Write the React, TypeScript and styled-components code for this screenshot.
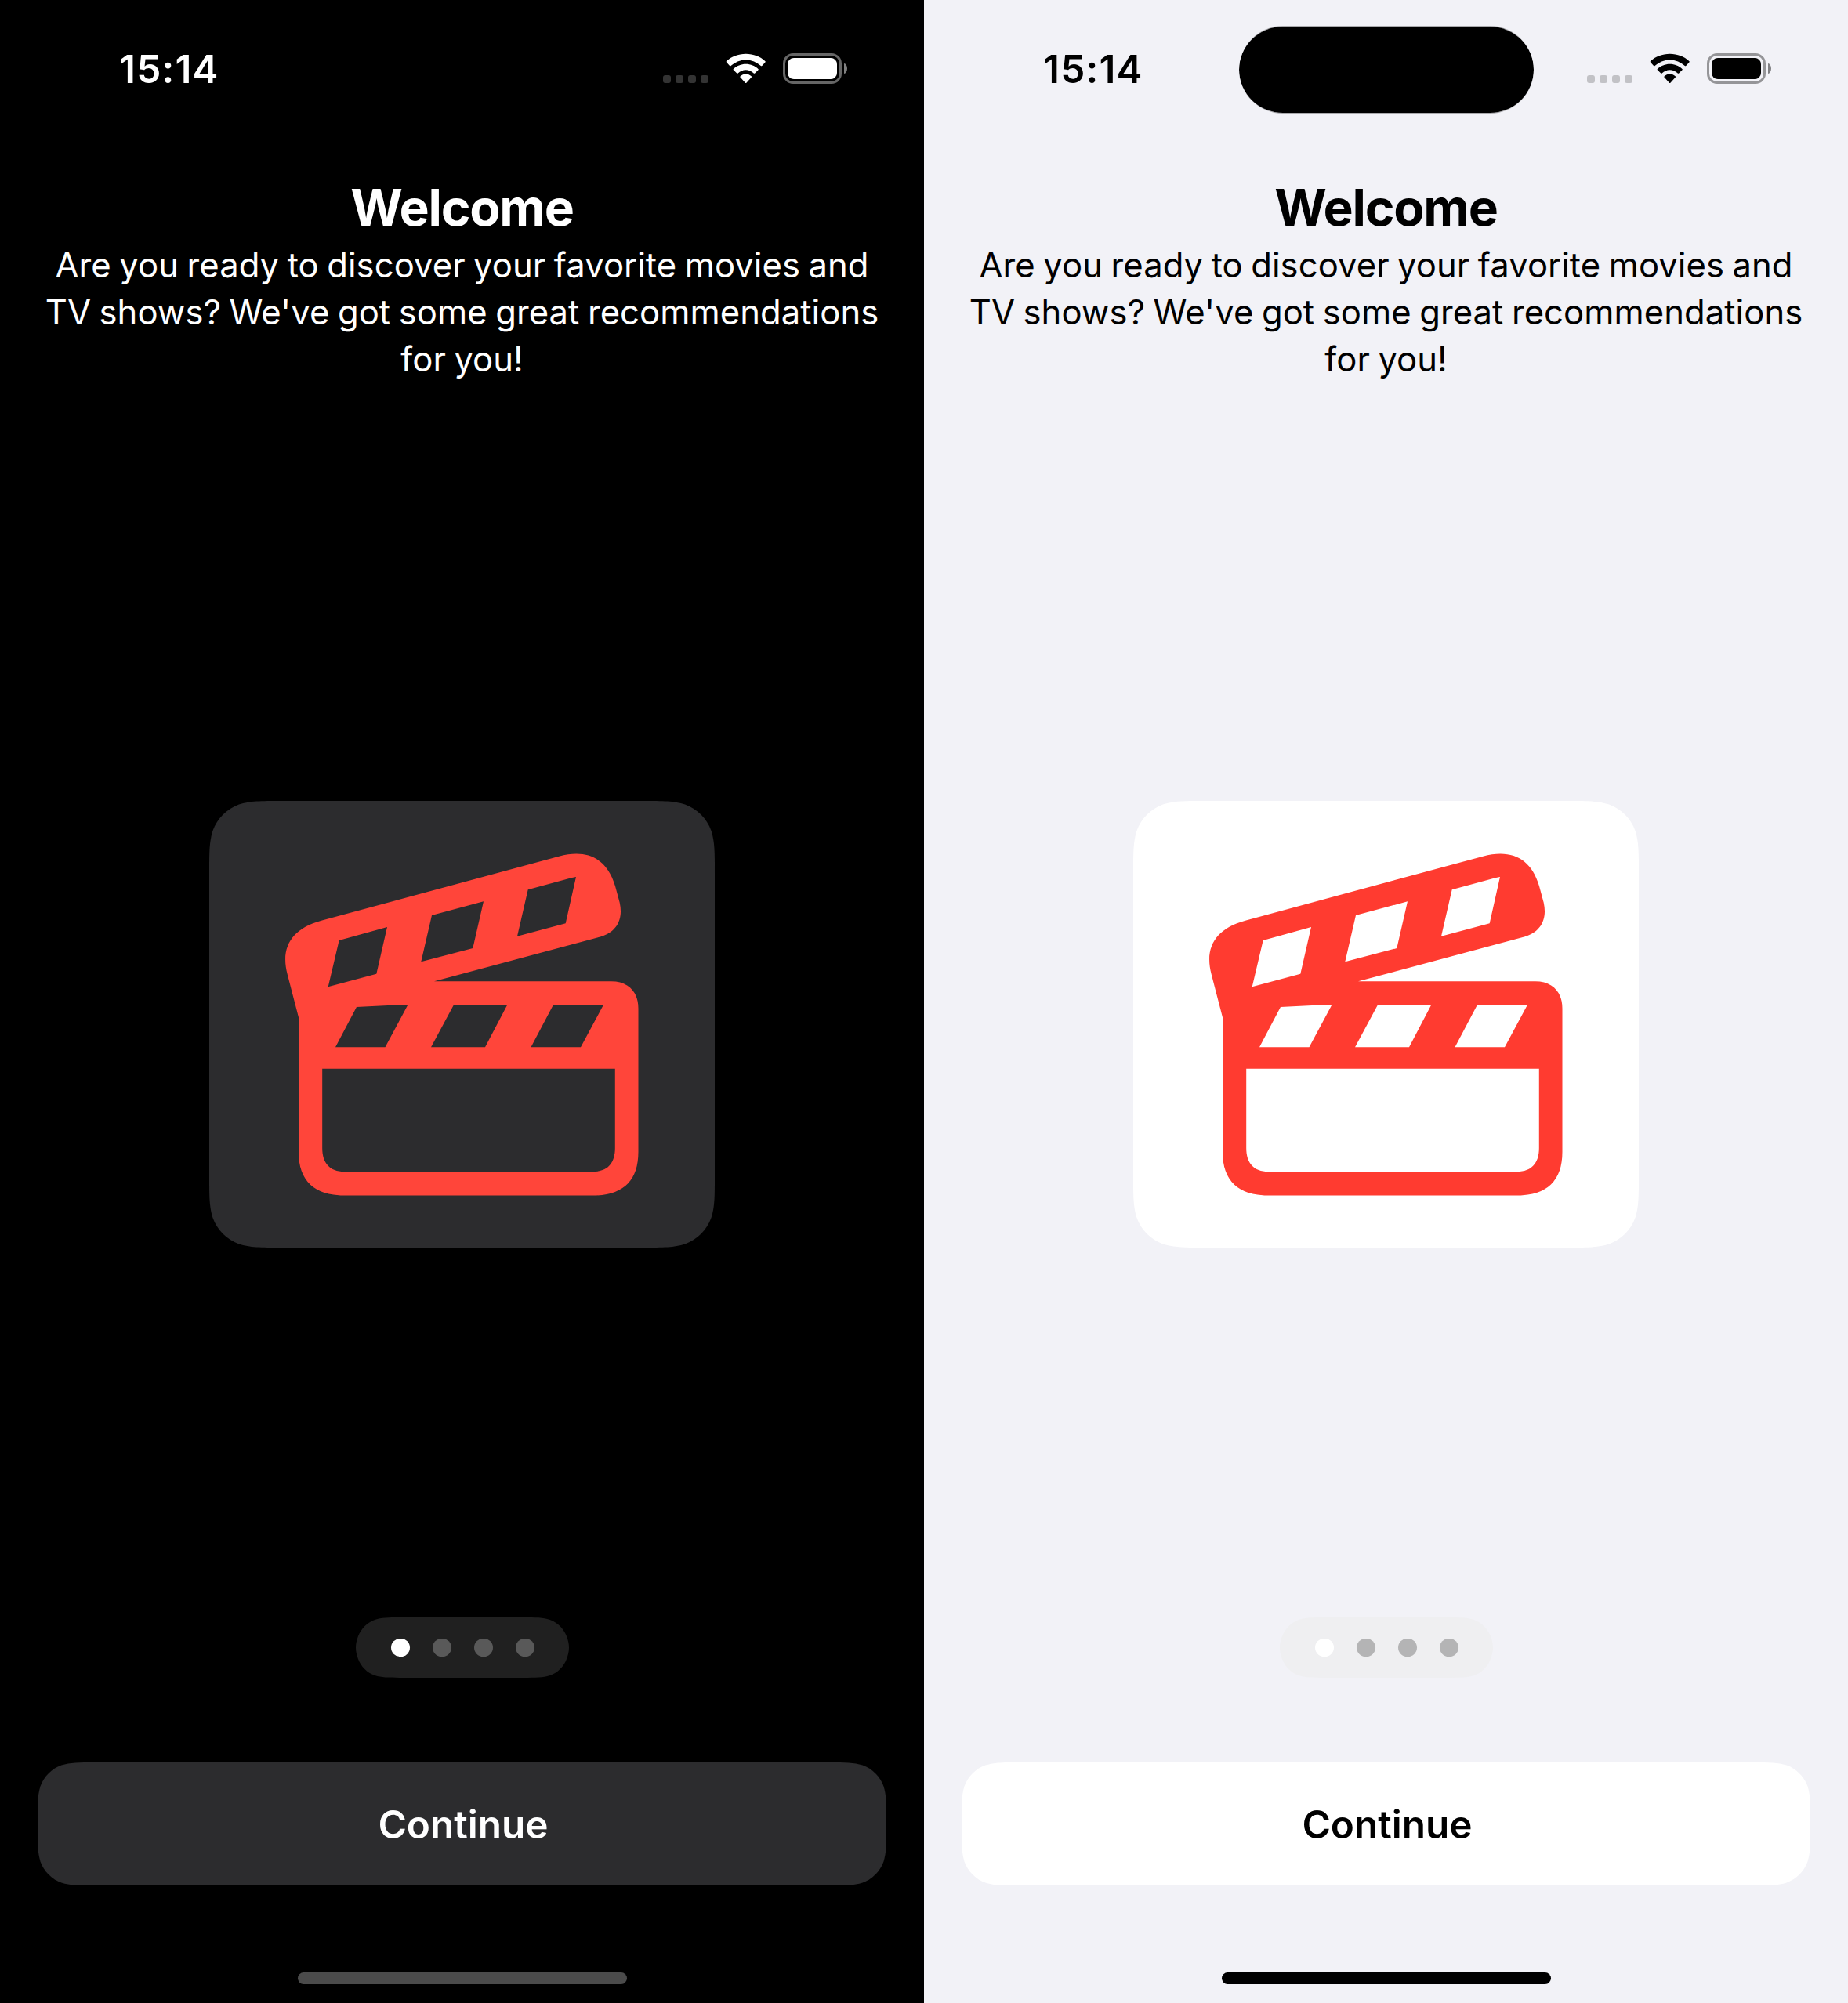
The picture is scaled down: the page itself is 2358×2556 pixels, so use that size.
import React from "react";
import styled, { createGlobalStyle, ThemeProvider } from "styled-components";

const darkTheme = {
  background: "#000000",
  label: "#ffffff",
  surface: "#2c2c2e",
  accent: "#ff453a",
  cell: "#333333",
  batteryRim: "#666666",
  batteryCap: "#808080",
  pill: "#202020",
  dot: "#595959",
  activeDot: "#ffffff",
  indicator: "#4b4b4b",
};

const lightTheme: typeof darkTheme = {
  background: "#f2f2f7",
  label: "#000000",
  surface: "#ffffff",
  accent: "#ff3b30",
  cell: "#c2c2c6",
  batteryRim: "#959598",
  batteryCap: "#808083",
  pill: "#efeff1",
  dot: "#b4b4b5",
  activeDot: "#ffffff",
  indicator: "#000000",
};

/* Rounded rectangle with curvature-continuous corners. */
const continuousRect = (w: number, h: number, r: number) => {
  const a = 1.528665 * r;
  const b = 1.088493 * r;
  const c = 0.868407 * r;
  const d = 0.631494 * r;
  const e = 0.372824 * r;
  const f = 0.16906 * r;
  const g = 0.074911 * r;
  return [
    `M${a} 0 L${w - a} 0`,
    `C${w - b} 0 ${w - c} 0 ${w - d} ${g}`,
    `C${w - e} ${f} ${w - f} ${e} ${w - g} ${d}`,
    `C${w} ${c} ${w} ${b} ${w} ${a}`,
    `L${w} ${h - a}`,
    `C${w} ${h - b} ${w} ${h - c} ${w - g} ${h - d}`,
    `C${w - f} ${h - e} ${w - e} ${h - f} ${w - d} ${h - g}`,
    `C${w - c} ${h} ${w - b} ${h} ${w - a} ${h}`,
    `L${a} ${h}`,
    `C${b} ${h} ${c} ${h} ${d} ${h - g}`,
    `C${e} ${h - f} ${f} ${h - e} ${g} ${h - d}`,
    `C0 ${h - c} 0 ${h - b} 0 ${h - a}`,
    `L0 ${a}`,
    `C0 ${b} 0 ${c} ${g} ${d}`,
    `C${f} ${e} ${e} ${f} ${d} ${g}`,
    `C${c} 0 ${b} 0 ${a} 0Z`,
  ].join(" ");
};

/* Capsule whose ends ease into the straight edges. */
const continuousCapsule = (w: number, h: number) => {
  const r = h / 2;
  const a = 1.528665 * r;
  const b = 1.088493 * r;
  const c = 0.868407 * r;
  const d = 0.631494 * r;
  const e = 0.372824 * r;
  const f = 0.16906 * r;
  const g = 0.074911 * r;
  const i = 0.03 * r;
  const j = 0.75 * r;
  const k = 0.87 * r;
  return [
    `M${a} 0 L${w - a} 0`,
    `C${w - b} 0 ${w - c} 0 ${w - d} ${g}`,
    `C${w - e} ${f} ${w - f} ${e} ${w - g} ${d}`,
    `C${w - i} ${j} ${w} ${k} ${w} ${r}`,
    `C${w} ${h - k} ${w - i} ${h - j} ${w - g} ${h - d}`,
    `C${w - f} ${h - e} ${w - e} ${h - f} ${w - d} ${h - g}`,
    `C${w - c} ${h} ${w - b} ${h} ${w - a} ${h}`,
    `L${a} ${h}`,
    `C${b} ${h} ${c} ${h} ${d} ${h - g}`,
    `C${e} ${h - f} ${f} ${h - e} ${g} ${h - d}`,
    `C${i} ${h - j} 0 ${h - k} 0 ${r}`,
    `C0 ${k} ${i} ${j} ${g} ${d}`,
    `C${f} ${e} ${e} ${f} ${d} ${g}`,
    `C${c} 0 ${b} 0 ${a} 0Z`,
  ].join(" ");
};

const GlobalStyle = createGlobalStyle`
  *, *::before, *::after { box-sizing: border-box; }
  body {
    margin: 0;
    font-family: Inter, "Liberation Sans", sans-serif;
  }
`;

const Gallery = styled.main`
  display: flex;
  width: 2358px;
  height: 2556px;
`;

const Screen = styled.section`
  position: relative;
  display: flex;
  flex-direction: column;
  width: 1179px;
  height: 2556px;
  overflow: hidden;
  background: ${({ theme }) => theme.background};
  color: ${({ theme }) => theme.label};
`;

const StatusBar = styled.header`
  display: flex;
  flex: none;
  justify-content: space-between;
  height: 177px;
  padding: 58px 98px 0 152px;
`;

const Time = styled.time`
  font-size: 49.5px;
  font-weight: 600;
  line-height: 60px;
  letter-spacing: 1.2px;
  white-space: nowrap;
`;

const StatusIcons = styled.div`
  display: flex;
  align-items: flex-start;
  padding-top: 10px;
`;

const Cells = styled.div`
  display: flex;
  gap: 6px;
  margin: 28px 22px 0 0;
`;

const Cell = styled.span`
  width: 10px;
  height: 10px;
  border-radius: 3px;
  background: ${({ theme }) => theme.cell};
`;

const WifiGlyph = styled.svg`
  display: block;
  width: 51px;
  height: 39px;
  margin-right: 22px;
  fill: ${({ theme }) => theme.label};
`;

const Battery = styled.div`
  display: flex;
  align-items: center;
  gap: 3px;
`;

const BatteryBody = styled.div`
  width: 75px;
  height: 39px;
  padding: 3px;
  border: 3px solid ${({ theme }) => theme.batteryRim};
  border-radius: 13px;
`;

const BatteryCharge = styled.div`
  height: 27px;
  border-radius: 8px;
  background: ${({ theme }) => theme.label};
`;

const BatteryCap = styled.div`
  width: 4px;
  height: 13px;
  border-radius: 0 4px 4px 0 / 0 6.5px 6.5px 0;
  background: ${({ theme }) => theme.batteryCap};
`;

const Island = styled.div`
  position: absolute;
  top: 33px;
  left: 402px;
  width: 376px;
  height: 112px;
  border: solid rgba(0, 0, 0, 0.3);
  border-width: 1px 0;
  border-radius: 56px;
  background: #000000;
  background-clip: padding-box;
`;

const Intro = styled.div`
  flex: none;
  height: 327px;
  padding-top: 46px;
  text-align: center;
`;

const Title = styled.h1`
  margin: 0;
  font-size: 64.2px;
  font-weight: 700;
  line-height: 84px;
  letter-spacing: -1.2px;
`;

const Message = styled.p`
  margin: 2px 0 0;
  font-size: 43.6px;
  font-weight: 400;
  line-height: 60px;
  letter-spacing: 0.05px;
  word-spacing: -1.8px;
  white-space: pre-line;
`;

const Stage = styled.div`
  display: flex;
  flex: none;
  justify-content: center;
  height: 1560px;
  padding-top: 518px;
`;

const Card = styled.div`
  width: 645px;
  height: 570px;
  clip-path: path("${continuousRect(645, 570, 60)}");
  background: ${({ theme }) => theme.surface};
`;

const ClapperGlyph = styled.svg`
  display: block;
  width: 645px;
  height: 570px;
  fill: ${({ theme }) => theme.accent};
`;

const PageControl = styled.nav`
  display: flex;
  flex: none;
  align-self: center;
  align-items: center;
  justify-content: center;
  gap: 29.6px;
  width: 272px;
  height: 77px;
  margin-left: 1px;
  padding-left: 1px;
  clip-path: path("${continuousCapsule(272, 77)}");
  background: ${({ theme }) => theme.pill};
`;

const PageDot = styled.span<{ $active: boolean }>`
  width: 23.5px;
  height: 23.5px;
  border-radius: 50%;
  background: ${({ theme, $active }) => ($active ? theme.activeDot : theme.dot)};
`;

const ContinueButton = styled.button`
  flex: none;
  align-self: center;
  width: 1083px;
  height: 157px;
  margin-top: 108px;
  padding: 0 0 0 3px;
  border: 0;
  clip-path: path("${continuousRect(1083, 157, 48)}");
  background: ${({ theme }) => theme.surface};
  color: inherit;
  font-family: inherit;
  font-size: 49.5px;
  font-weight: 600;
  line-height: 60px;
`;

const HomeIndicator = styled.div`
  flex: none;
  align-self: center;
  width: 420px;
  height: 15px;
  margin-top: 111px;
  margin-left: 1px;
  border-radius: 7.5px;
  background: ${({ theme }) => theme.indicator};
`;

const Wifi = () => (
  <WifiGlyph viewBox="926 68 51 39">
    <path d="M951.7 68.8 C961.4 68.8 970.1 72.4 976.3 77.9 C976.8 78.3 976.8 78.9 976.4 79.4 L972.3 83.9 C971.9 84.4 971.3 84.4 970.8 84 C965.6 79.4 959 76.4 951.7 76.4 C944.4 76.4 937.8 79.4 932.6 84 C932.1 84.4 931.5 84.4 931.1 83.9 L927 79.4 C926.6 78.9 926.6 78.3 927.1 77.9 C933.3 72.4 942 68.8 951.7 68.8Z" />
    <path d="M951.7 81.7 C957.8 81.7 963.3 84.1 967.4 87.9 C967.9 88.3 967.9 88.9 967.5 89.3 L963.2 93.4 C962.8 93.9 962.2 93.9 961.7 93.5 C959 91.1 955.5 89.3 951.7 89.3 C947.9 89.3 944.4 91.1 941.7 93.5 C941.2 93.9 940.6 93.9 940.2 93.4 L935.9 89.3 C935.5 88.9 935.5 88.3 936 87.9 C940.1 84.1 945.6 81.7 951.7 81.7Z" />
    <path d="M951.7 94.5 C954.5 94.5 956.9 95.6 958.7 97.3 C959.2 97.8 959.1 98.4 958.7 98.8 L952.4 105.7 C952 106.2 951.4 106.2 951 105.7 L944.7 98.8 C944.3 98.4 944.2 97.8 944.7 97.3 C946.5 95.6 948.9 94.5 951.7 94.5Z" />
  </WifiGlyph>
);

const Clapperboard = () => (
  <ClapperGlyph viewBox="267 1022 645 570">
    <path
      fillRule="evenodd"
      d="M410 1174.7 L713.3 1092.7 C750 1083.2 774.5 1095.5 785 1130.7 L790.7 1151.7 C795.5 1173 787 1189.3 766.7 1195.3 L554 1252.3 H780 C801.5 1252.3 814.5 1265.5 814.5 1286.7 V1470 C814.5 1506.5 795 1525.5 757 1525.5 H439 C401 1525.5 381 1506.5 381 1470 V1298.3 L366.7 1243.3 C357.5 1208.5 372.5 1185 410 1174.7Z
      M432.7 1200 L494 1183 L480.3 1242.7 L418.7 1259.3Z
      M551 1168 L617 1150.3 L603.3 1210 L537.3 1227.3Z
      M673.7 1135.3 L722.5 1122 Q729 1120 735 1119 L721.7 1178.3 L660 1194.7Z
      M455 1285 L505 1282.4 H520.3 L491.5 1336.3 H428Z
      M579 1282.3 H647.3 L619 1336.3 H550Z
      M706 1282.3 H770 L741 1336.3 H677.5Z
      M411.2 1363.7 H784.8 V1465 C784.8 1484.5 775 1495 757 1495 H439 C421 1495 411.2 1484.5 411.2 1465Z"
    />
  </ClapperGlyph>
);

type PhoneProps = { theme: typeof darkTheme; island?: boolean };

const WelcomeScreen = ({ theme, island = false }: PhoneProps) => (
  <ThemeProvider theme={theme}>
    <Screen>
      <StatusBar>
        <Time>15:14</Time>
        <StatusIcons>
          <Cells>
            {[0, 1, 2, 3].map((cell) => (
              <Cell key={cell} />
            ))}
          </Cells>
          <Wifi />
          <Battery>
            <BatteryBody>
              <BatteryCharge />
            </BatteryBody>
            <BatteryCap />
          </Battery>
        </StatusIcons>
      </StatusBar>
      {island && <Island />}
      <Intro>
        <Title>Welcome</Title>
        <Message>
          {"Are you ready to discover your favorite movies and\nTV shows? We've got some great recommendations\nfor you!"}
        </Message>
      </Intro>
      <Stage>
        <Card>
          <Clapperboard />
        </Card>
      </Stage>
      <PageControl>
        {[0, 1, 2, 3].map((page) => (
          <PageDot key={page} $active={page === 0} />
        ))}
      </PageControl>
      <ContinueButton type="button">Continue</ContinueButton>
      <HomeIndicator />
    </Screen>
  </ThemeProvider>
);

export default function App() {
  return (
    <>
      <GlobalStyle />
      <Gallery>
        <WelcomeScreen theme={darkTheme} />
        <WelcomeScreen theme={lightTheme} island />
      </Gallery>
    </>
  );
}
